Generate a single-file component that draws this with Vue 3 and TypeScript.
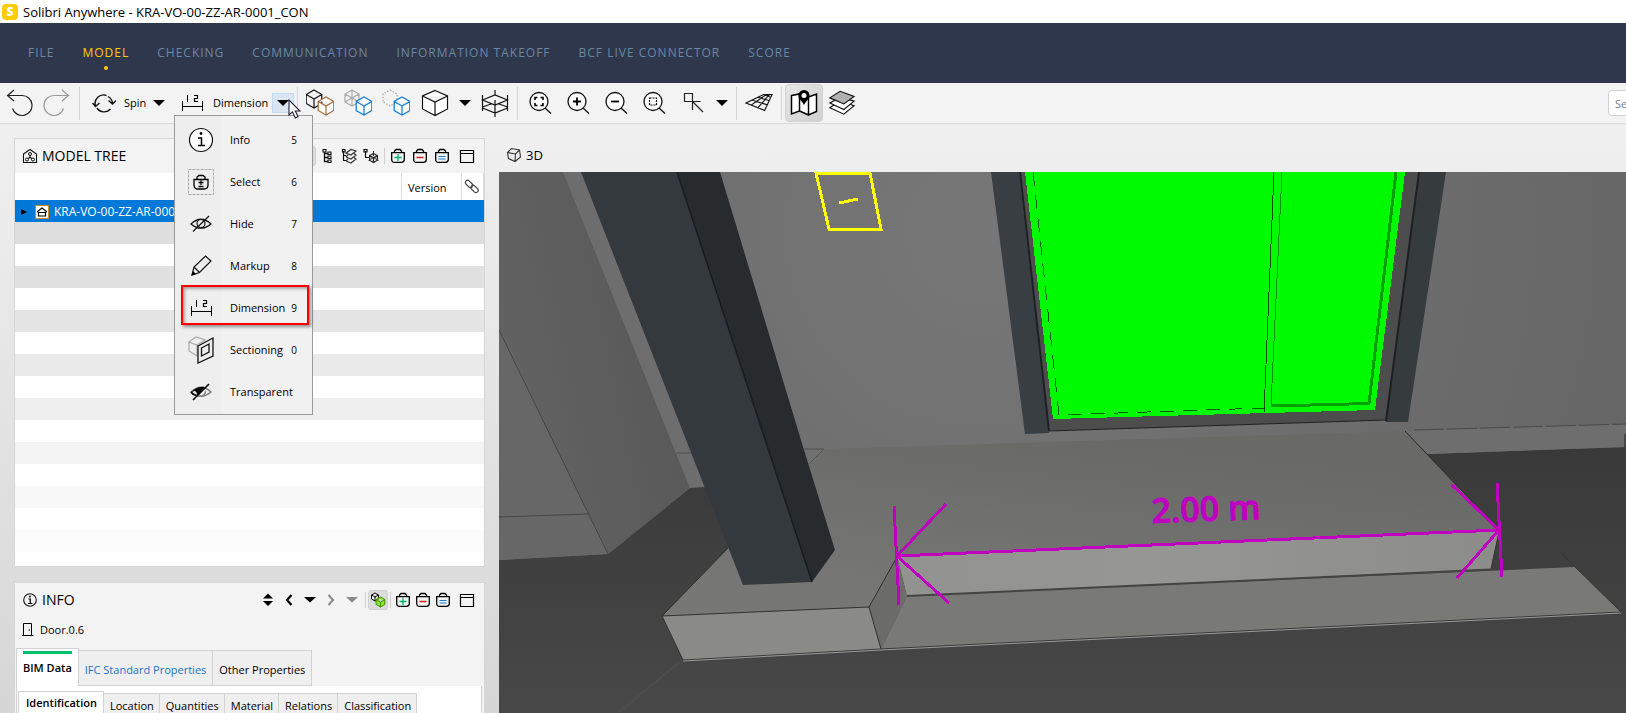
<script setup lang="ts">
import { ref } from 'vue'

interface ToolItem {
  icon: string
  label: string
}

interface MenuEntry {
  icon: string
  label: string
  key: string
}

const navItems: string[] = [
  'FILE',
  'MODEL',
  'CHECKING',
  'COMMUNICATION',
  'INFORMATION TAKEOFF',
  'BCF LIVE CONNECTOR',
  'SCORE',
]
const activeNav = ref('MODEL')

const visibilityTools: ToolItem[] = [
  { icon: 'cubes-add', label: 'Add components' },
  { icon: 'cubes-transparent', label: 'Show others transparent' },
  { icon: 'cubes-only', label: 'Show only' },
]

const zoomTools: ToolItem[] = [
  { icon: 'zoom-fit', label: 'Zoom to fit' },
  { icon: 'zoom-in', label: 'Zoom in' },
  { icon: 'zoom-out', label: 'Zoom out' },
  { icon: 'zoom-area', label: 'Zoom to area' },
  { icon: 'picker', label: 'Pick point' },
]

const menuEntries: MenuEntry[] = [
  { icon: 'm-info', label: 'Info', key: '5' },
  { icon: 'm-select', label: 'Select', key: '6' },
  { icon: 'm-hide', label: 'Hide', key: '7' },
  { icon: 'm-markup', label: 'Markup', key: '8' },
  { icon: 'dimension', label: 'Dimension', key: '9' },
  { icon: 'm-section', label: 'Sectioning', key: '0' },
  { icon: 'm-transparent', label: 'Transparent', key: '' },
]
const currentTool = ref('Dimension')

const treeTools: ToolItem[] = [
  { icon: 'tree', label: 'Containment tree' },
  { icon: 'tree-layers', label: 'Layer tree' },
  { icon: 'tree-cube', label: 'Component tree' },
]

const basketTools: ToolItem[] = [
  { icon: 'basket-add', label: 'Add to basket' },
  { icon: 'basket-remove', label: 'Remove from basket' },
  { icon: 'basket-set', label: 'Set to basket' },
]

const historyTools: ToolItem[] = [
  { icon: 'updown', label: 'Step' },
  { icon: 'back', label: 'Back' },
  { icon: 'down', label: 'Back history' },
  { icon: 'forward', label: 'Forward' },
  { icon: 'down-gray', label: 'Forward history' },
]

const propertyTabs: string[] = ['BIM Data', 'IFC Standard Properties', 'Other Properties']
const activeProperty = ref('BIM Data')

const detailTabs: string[] = [
  'Identification',
  'Location',
  'Quantities',
  'Material',
  'Relations',
  'Classification',
]
const activeDetail = ref('Identification')

const stripes: string[] = [
  '#dedede', '#ffffff', '#e1e1e1', '#ffffff', '#e5e5e5', '#ffffff', '#eaeaea', '#ffffff',
  '#efefef', '#ffffff', '#f3f3f3', '#ffffff', '#f8f8f8', '#ffffff', '#fcfcfc',
]

/** Isometric cube outline with its three visible faces. */
function cube(cx: number, cy: number, r: number): string {
  const a = Math.round(r * 8.7) / 10
  const h = r / 2
  return (
    `M${cx} ${cy - r}L${cx + a} ${cy - h}V${cy + h}L${cx} ${cy + r}L${cx - a} ${cy + h}V${cy - h}Z` +
    `M${cx - a} ${cy - h}L${cx} ${cy}L${cx + a} ${cy - h}M${cx} ${cy}V${cy + r}`
  )
}
</script>

<template>
  <div class="app">
    <svg class="defs" aria-hidden="true">
      <defs>
        <symbol id="undo" viewBox="0 0 28 28"><path d="M9 1L2.500 6.500L9 12M2.500 6.500H17a10 10 0 1 1-9.500 13" fill="none" stroke="#222" stroke-width="1.200" /></symbol>
        <symbol id="redo" viewBox="0 0 28 28"><path d="M19 1L25.500 6.500L19 12M25.500 6.500H11a10 10 0 1 0 9.500 13" fill="none" stroke="#999" stroke-width="1.200" /></symbol>
        <symbol id="spin" viewBox="0 0 24 28">
          <path d="M3.500 17A8.500 8.500 0 0 1 14.500 6.500M0.500 14L3.500 17.500L7.500 14M16 7.500A8.500 8.500 0 0 1 20.500 14M16.500 11.500L20.500 15L24 11.500M5 19A8.500 8.500 0 0 0 18.500 20" fill="none" stroke="#111" stroke-width="1.400" />
        </symbol>
        <symbol id="dimension" viewBox="0 0 28 28">
          <path d="M4.500 12V22M24.500 12V22M4.500 17.500H24.500M9.500 6V13" fill="none" stroke="#000" />
          <path d="M16 6.500H19.500V9.500H16.500V12.500H20" fill="none" stroke="#000" stroke-width="1.200" />
        </symbol>
        <symbol id="caret" viewBox="0 0 12 8"><path d="M0 1H12L6 7Z" fill="#000" /></symbol>
        <symbol id="cubes-add" viewBox="0 0 28 28">
          <path :d="cube(8, 10, 9)" fill="#f4f4f4" stroke="#111" stroke-width="1.200" />
          <path :d="cube(20, 17, 9)" fill="#fff" stroke="#a56a3a" stroke-width="1.200" />
        </symbol>
        <symbol id="cubes-transparent" viewBox="0 0 28 28">
          <path :d="cube(8, 9, 8)" fill="none" stroke="#aaa" stroke-width="1.200" />
          <path d="M8 1V9L1 13M8 9L15 13" fill="none" stroke="#aaa" stroke-width="1.200" />
          <path :d="cube(20, 17, 9)" fill="#fff" stroke="#1b82d6" stroke-width="1.300" />
        </symbol>
        <symbol id="cubes-only" viewBox="0 0 28 28">
          <path d="M8 1L15 5V13L8 17L1 13V5Z" fill="none" stroke="#aaa" stroke-width="1.200" stroke-dasharray="1.500 1.500" />
          <path :d="cube(20, 17, 9)" fill="#fff" stroke="#1b82d6" stroke-width="1.300" />
        </symbol>
        <symbol id="cube-large" viewBox="0 0 28 28"><path d="M14 1.500L26.500 7V20L14 26.500L1.500 20V7ZM1.500 7L14 13L26.500 7M14 13V26.500" fill="#fff" stroke="#111" stroke-width="1.200" /></symbol>
        <symbol id="section" viewBox="0 0 28 28">
          <path d="M1.500 6V22M26.500 6V22M14 1V6M14 11V28M1.500 11L14 6L26.500 11L14 16ZM1.500 19L14 24L26.500 19M1.500 18L10 15M26.500 18L18 15" fill="none" stroke="#111" stroke-width="1.200" />
        </symbol>
        <symbol id="lens" viewBox="0 0 28 28"><circle cx="13" cy="12.500" r="9" fill="#fff" stroke="#111" stroke-width="1.300" /><path d="M19 19L25 24.500" stroke="#111" stroke-width="1.300" /></symbol>
        <symbol id="zoom-fit" viewBox="0 0 28 28">
          <use href="#lens" /><path d="M9 11V8.500H11.500M14.500 8.500H17V11M17 14V16.500H14.500M11.500 16.500H9V14" fill="none" stroke="#000" stroke-width="1.600" />
        </symbol>
        <symbol id="zoom-in" viewBox="0 0 28 28"><use href="#lens" /><path d="M9 12.500H17M13 8.500V16.500" stroke="#000" stroke-width="1.800" /></symbol>
        <symbol id="zoom-out" viewBox="0 0 28 28"><use href="#lens" /><path d="M9 12.500H17" stroke="#000" stroke-width="1.800" /></symbol>
        <symbol id="zoom-area" viewBox="0 0 28 28"><use href="#lens" /><rect x="9.500" y="9" width="7" height="7" fill="none" stroke="#000" stroke-width="1.200" stroke-dasharray="2 1" /></symbol>
        <symbol id="picker" viewBox="0 0 28 28">
          <path d="M6.500 4.500H14.500V12.500H6.500ZM14.500 12.500H22.500M14.500 12.500V21M14.500 12.500L25 23" fill="none" stroke="#222" stroke-width="1.200" />
        </symbol>
        <symbol id="floor" viewBox="0 0 30 28">
          <path d="M1 14L20 5H29L21 22ZM7 16L23 5M14 19L26 5M8 11L24 16M14 8L26.500 11.500M20 5L28 8" fill="none" stroke="#111" stroke-width="1.200" />
        </symbol>
        <symbol id="map" viewBox="0 0 28 28">
          <path d="M1.500 6.500L9.500 5V22L1.500 25ZM9.500 22L18.500 26L26.500 22.500V5L18.500 8V26M9.500 5V22L18.500 26V8Z" fill="#fff" stroke="#000" stroke-width="1.500" />
          <path d="M14 1A5.500 5.500 0 0 1 19.500 6.500C19.500 10 16 12 14 16C12 12 8.500 10 8.500 6.500A5.500 5.500 0 0 1 14 1Z" fill="#000" /><circle cx="14" cy="6.500" r="2.500" fill="#fff" />
        </symbol>
        <symbol id="layers" viewBox="0 0 30 28">
          <g stroke="#111" stroke-width="1.200" fill="#fff">
            <path d="M2 19L17 26L28 17L13 12Z" /><path d="M2 14L17 21L28 12L13 8Z" /><path d="M2 8.500L17 15L28 7L13 1.500Z" fill="#b0b0b0" />
          </g>
        </symbol>
        <symbol id="m-info" viewBox="0 0 28 28">
          <circle cx="14" cy="14" r="11.500" fill="#fff" stroke="#111" stroke-width="1.200" />
          <path d="M11 12H14.500V19M11 19.500H18" fill="none" stroke="#000" stroke-width="1.500" /><circle cx="14" cy="7.500" r="1.400" />
        </symbol>
        <symbol id="m-select" viewBox="0 0 28 28">
          <rect x="1.500" y="1.500" width="25" height="25" fill="none" stroke="#aaa" stroke-dasharray="3 1" />
          <path d="M7 11.500H21V17Q21 21 17 21H11Q7 21 7 17ZM10 11V9L12 7.500H16L18 9V11M11.500 14.500H16.500M14 12.500V17M11.500 18.500H16.500" fill="none" stroke="#000" stroke-width="1.300" />
        </symbol>
        <symbol id="m-hide" viewBox="0 0 28 28">
          <path d="M4 14Q14 4.500 24 14Q14 22.500 4 14Z" fill="none" stroke="#111" stroke-width="1.200" />
          <circle cx="14" cy="13.500" r="4" fill="none" stroke="#111" stroke-width="1.200" /><path d="M6 21.500L22 6" stroke="#111" stroke-width="1.200" />
        </symbol>
        <symbol id="m-markup" viewBox="0 0 28 28">
          <path d="M5 23L7 15L18.500 4L24 9L12.500 20.500ZM7 15L12.500 20.500" fill="none" stroke="#111" stroke-width="1.200" /><path d="M4.500 23.500L6 19L9 22Z" />
        </symbol>
        <symbol id="m-section" viewBox="0 0 28 28">
          <path d="M2 6L9 1L18 4L10 9ZM2 6V15L10 20M10 9V20" fill="none" stroke="#aaa" stroke-width="1.200" />
          <path d="M11 10L26 2V20L11 27ZM14.500 12L22 8V16L14.500 20Z" fill="none" stroke="#111" stroke-width="1.300" />
        </symbol>
        <symbol id="m-transparent" viewBox="0 0 28 28">
          <path d="M4 14Q14 4.500 24 14Q14 22.500 4 14Z" fill="none" stroke="#777" stroke-width="1.400" />
          <path d="M4 14Q11 8 18 9L10 18Q10 14 8 13Z" /><path d="M18.500 13A5 5 0 0 1 12 18" fill="none" stroke="#888" stroke-width="1.500" />
          <path d="M4 14Q6 17 9 17.500M6 22L22 6" fill="none" stroke="#000" stroke-width="1.600" />
        </symbol>
        <symbol id="model" viewBox="0 0 16 16">
          <path d="M1.500 6L8 1.500L14.500 6V14.500H1.500ZM8 6V9L5 12M8 9L11 12" fill="none" stroke="#111" stroke-width="1.100" />
          <g fill="#f3f3f3" stroke="#111"><circle cx="8" cy="6" r="1.500" /><circle cx="5" cy="11.500" r="1.500" /><circle cx="11" cy="11.500" r="1.500" /></g>
        </symbol>
        <symbol id="tree" viewBox="0 0 16 16">
          <path d="M5.500 3V13.500H9M5.500 5.500H9M5.500 9.500H9" fill="none" stroke="#111" stroke-width="1.300" />
          <path d="M4 1.500H7V4H4ZM9 4H12V6.500H9ZM9 8H12V10.500H9ZM9 12H12V14.500H9Z" fill="#fff" stroke="#111" stroke-width="1.100" />
        </symbol>
        <symbol id="tree-layers" viewBox="0 0 16 16">
          <path d="M2.500 3V12.500H6M2.500 7.500H5M1.500 1.500H4V4H1.500Z" fill="none" stroke="#111" stroke-width="1.200" />
          <path d="M5 5L10 1.500L15 3L10 7ZM5 9L10 11L15 7L13 5.500M5 9L7 7M5 13L10 15L15 11L13 9.500M5 13L7 11" fill="none" stroke="#333" stroke-width="1.200" />
        </symbol>
        <symbol id="tree-cube" viewBox="0 0 16 16">
          <path d="M2.500 3V9.500H6M1 1.500H4V4H1Z" fill="none" stroke="#111" stroke-width="1.200" />
          <path :d="cube(10.5, 10, 4.5)" fill="none" stroke="#222" stroke-width="1.200" /><path d="M10.500 3V8M5.500 12.500L15 7M15.500 12.500L6 7" stroke="#333" />
        </symbol>
        <symbol id="basket" viewBox="0 0 16 16">
          <path d="M1.700 4.700H14.300V11.500Q14.300 14.300 11.500 14.300H4.500Q1.700 14.300 1.700 11.500ZM4.500 4.500V3L6 1.500H10L11.500 3V4.500" fill="none" stroke="#000" stroke-width="1.300" />
        </symbol>
        <symbol id="basket-add" viewBox="0 0 16 16"><use href="#basket" /><path d="M4.500 9.500H11.500M8 6V13" stroke="#00b367" stroke-width="1.300" /></symbol>
        <symbol id="basket-remove" viewBox="0 0 16 16"><use href="#basket" /><path d="M4.500 9.500H11.500" stroke="#e01010" stroke-width="1.400" /></symbol>
        <symbol id="basket-set" viewBox="0 0 16 16"><use href="#basket" /><path d="M4.500 8.500H11.500M4.500 11H11.500" stroke="#1b7cd0" stroke-width="1.200" /></symbol>
        <symbol id="window" viewBox="0 0 16 16"><path d="M1.500 2.500H14.500V14.500H1.500ZM1.500 5.500H14.500" fill="none" stroke="#000" stroke-width="1.200" /></symbol>
        <symbol id="link" viewBox="0 0 16 16">
          <g fill="none" stroke="#444" stroke-width="1.200"><rect x="1" y="3.500" width="8.500" height="4.500" rx="2.200" transform="rotate(45 5 5.500)" /><rect x="6.500" y="8.500" width="8.500" height="4.500" rx="2.200" transform="rotate(45 10.500 10.500)" /></g>
        </symbol>
        <symbol id="house" viewBox="0 0 14 14">
          <rect x="0.500" y="0.500" width="13" height="13" fill="#fff" stroke="#c98a2b" /><path d="M2 7L7 3L12 7M3.500 7.500H10.500V11H3.500Z" fill="none" stroke="#000" stroke-width="1.200" />
        </symbol>
        <symbol id="expander" viewBox="0 0 8 8"><path d="M1 1L7 4L1 7Z" /></symbol>
        <symbol id="info" viewBox="0 0 16 16">
          <circle cx="8" cy="8" r="6.300" fill="none" stroke="#111" stroke-width="1.100" /><path d="M6.500 7H8.300V11M6 11.500H10.500" fill="none" stroke="#000" stroke-width="1.200" /><circle cx="8" cy="4.500" r="0.900" />
        </symbol>
        <symbol id="updown" viewBox="0 0 16 16"><path d="M3 6.500H13L8 1.500ZM3 9H13L8 14Z" /></symbol>
        <symbol id="back" viewBox="0 0 16 16"><path d="M10.500 3L6 8L10.500 13" fill="none" stroke="#000" stroke-width="2.200" /></symbol>
        <symbol id="forward" viewBox="0 0 16 16"><path d="M5.500 3L10 8L5.500 13" fill="none" stroke="#888" stroke-width="2" /></symbol>
        <symbol id="down" viewBox="0 0 16 16"><path d="M2 5H14L8 10.500Z" /></symbol>
        <symbol id="down-gray" viewBox="0 0 16 16"><path d="M2 5H14L8 10.500Z" fill="#888" /></symbol>
        <symbol id="green-cubes" viewBox="0 0 16 16"><path :d="cube(5, 5, 4)" fill="#eee" stroke="#000" /><path :d="cube(10.5, 10, 5)" fill="#8be81c" stroke="#3f8f00" /></symbol>
        <symbol id="door" viewBox="0 0 16 16"><path d="M3.500 13.500V1.500H11.500V13.500M2 13.500H13.500M8.500 8H10" fill="none" stroke="#000" /></symbol>
        <symbol id="view3d" viewBox="0 0 16 16"><path d="M1.500 5.500L5.500 1.500L13.500 3L14.500 10L9 14.500L2.500 11.500ZM1.500 5.500L9.500 7L13.500 3M9.500 7L9 14.500" fill="none" stroke="#333" stroke-width="1.100" /></symbol>
      </defs>
    </svg>

    <header class="titlebar">
      <span class="logo">S</span>
      <span>Solibri Anywhere - KRA-VO-00-ZZ-AR-0001_CON</span>
    </header>

    <nav class="nav">
      <a v-for="item in navItems" :key="item" href="#" :class="{ active: item === activeNav }" @click.prevent="activeNav = item">{{ item }}</a>
    </nav>

    <div class="toolbar">
      <button class="tool" aria-label="Undo"><svg><use href="#undo" /></svg></button>
      <button class="tool" aria-label="Redo"><svg><use href="#redo" /></svg></button>
      <i class="sep"></i>
      <button class="tool spin"><svg><use href="#spin" /></svg>Spin</button>
      <button class="drop" aria-label="Spin options"><svg><use href="#caret" /></svg></button>
      <div class="dimension-group">
        <button class="tool dimension"><svg><use href="#dimension" /></svg>Dimension</button>
        <button class="drop open" aria-label="Dimension options"><svg><use href="#caret" /></svg></button>
        <div class="menu" role="menu">
          <button
            v-for="entry in menuEntries"
            :key="entry.label"
            role="menuitem"
            class="entry"
            :class="{ marked: entry.label === currentTool }"
            @click="currentTool = entry.label"
          >
            <svg><use :href="'#' + entry.icon" /></svg>
            <span class="entry-label">{{ entry.label }}</span>
            <span class="entry-key">{{ entry.key }}</span>
          </button>
        </div>
        <svg class="cursor" viewBox="0 0 14 21"><path d="M1 1V16L4.500 12.800L7.300 19L10 17.800L7.300 12H12Z" fill="#fff" stroke="#223" stroke-width="1.100" /></svg>
      </div>
      <i class="sep"></i>
      <button v-for="t in visibilityTools" :key="t.icon" class="tool" :aria-label="t.label"><svg><use :href="'#' + t.icon" /></svg></button>
      <button class="tool view-cube" aria-label="View cube"><svg><use href="#cube-large" /></svg></button>
      <button class="drop" aria-label="View options"><svg><use href="#caret" /></svg></button>
      <button class="tool" aria-label="Section box"><svg><use href="#section" /></svg></button>
      <i class="sep"></i>
      <button v-for="t in zoomTools" :key="t.icon" class="tool" :aria-label="t.label"><svg><use :href="'#' + t.icon" /></svg></button>
      <button class="drop" aria-label="Picker options"><svg><use href="#caret" /></svg></button>
      <i class="sep"></i>
      <button class="tool" aria-label="Grid"><svg><use href="#floor" /></svg></button>
      <i class="sep"></i>
      <button class="tool pressed" aria-label="Map"><svg><use href="#map" /></svg></button>
      <button class="tool" aria-label="Layers"><svg><use href="#layers" /></svg></button>
      <div class="search"><input type="text" placeholder="Search" aria-label="Search" /></div>
    </div>

    <main class="workspace">
      <aside class="side">
        <section class="panel tree-panel">
          <header class="panel-head">
            <svg><use href="#model" /></svg>
            <h2>MODEL TREE</h2>
            <div class="head-tools">
              <button class="mini on" aria-label="Tree view"></button>
              <button v-for="t in treeTools" :key="t.icon" class="mini" :aria-label="t.label"><svg><use :href="'#' + t.icon" /></svg></button>
              <i class="mini-sep"></i>
              <button v-for="t in basketTools" :key="t.icon" class="mini" :aria-label="t.label"><svg><use :href="'#' + t.icon" /></svg></button>
              <button class="mini last" aria-label="Maximise"><svg><use href="#window" /></svg></button>
            </div>
          </header>
          <table class="tree">
            <thead>
              <tr>
                <th class="col-name"></th>
                <th class="col-version">Version</th>
                <th class="col-link"><svg><use href="#link" /></svg></th>
              </tr>
            </thead>
            <tbody>
              <tr class="selected">
                <td colspan="3">
                  <div class="node">
                    <svg class="expander"><use href="#expander" /></svg>
                    <svg class="node-icon"><use href="#house" /></svg>
                    KRA-VO-00-ZZ-AR-0001_CON
                  </div>
                </td>
              </tr>
              <tr v-for="(color, i) in stripes" :key="i" :style="{ background: color }"><td colspan="3"></td></tr>
            </tbody>
          </table>
        </section>

        <section class="panel info-panel">
          <header class="panel-head">
            <svg><use href="#info" /></svg>
            <h2>INFO</h2>
            <div class="head-tools">
              <div class="history">
                <button v-for="t in historyTools" :key="t.icon" class="mini" :aria-label="t.label"><svg><use :href="'#' + t.icon" /></svg></button>
              </div>
              <i class="mini-sep"></i>
              <button class="mini on" aria-label="Follow selection"><svg><use href="#green-cubes" /></svg></button>
              <i class="mini-sep"></i>
              <button v-for="t in basketTools" :key="t.icon" class="mini tight" :aria-label="t.label"><svg><use :href="'#' + t.icon" /></svg></button>
              <button class="mini last" aria-label="Maximise"><svg><use href="#window" /></svg></button>
            </div>
          </header>
          <div class="object"><svg><use href="#door" /></svg>Door.0.6</div>
          <div class="tabs" role="tablist">
            <button v-for="tab in propertyTabs" :key="tab" role="tab" :class="{ active: tab === activeProperty, link: tab.startsWith('IFC') }" @click="activeProperty = tab">
              <span>{{ tab }}</span>
            </button>
          </div>
          <div class="tab-body">
            <div class="subtabs" role="tablist">
              <button v-for="tab in detailTabs" :key="tab" role="tab" :class="{ active: tab === activeDetail }" @click="activeDetail = tab">{{ tab }}</button>
            </div>
          </div>
        </section>
      </aside>

      <section class="view">
        <header class="view-head"><svg><use href="#view3d" /></svg>3D</header>
        <svg class="scene" viewBox="499 172 1127 541" preserveAspectRatio="xMinYMin slice" role="img" aria-label="3D model view with a 2.00 m dimension">
          <defs>
            <radialGradient id="wall" gradientUnits="userSpaceOnUse" cx="980" cy="230" r="680">
              <stop offset="0" stop-color="#777777" /><stop offset="1" stop-color="#666666" />
            </radialGradient>
            <linearGradient id="ground" x1="0" y1="0" x2="0" y2="1">
              <stop offset="0" stop-color="#393939" /><stop offset="1" stop-color="#484848" />
            </linearGradient>
            <linearGradient id="sidewall" gradientUnits="userSpaceOnUse" x1="499" y1="330" x2="640" y2="300">
              <stop offset="0" stop-color="#626262" /><stop offset="1" stop-color="#5a5a5a" />
            </linearGradient>
            <linearGradient id="slab" gradientUnits="userSpaceOnUse" x1="1000" y1="430" x2="980" y2="610">
              <stop offset="0" stop-color="#696968" /><stop offset="1" stop-color="#777776" />
            </linearGradient>
            <linearGradient id="riser" gradientUnits="userSpaceOnUse" x1="900" y1="0" x2="1500" y2="0">
              <stop offset="0" stop-color="#929290" /><stop offset="0.400" stop-color="#969694" /><stop offset="1" stop-color="#8c8c8a" />
            </linearGradient>
          </defs>
          <rect x="499" y="172" width="1127" height="541" fill="url(#wall)" />
          <path d="M499 560L608 554L690 488L704 487L1428 454L1626 447V713H499Z" fill="url(#ground)" />
          <path d="M499 172H563L690 488L608 554L499 330Z" fill="url(#sidewall)" />
          <path d="M499 330L608 554L499 560Z" fill="#676767" />
          <path d="M499 330L608 554M499 517L588 514" fill="none" stroke="#444" />
          <path d="M676 453H692M804 449H824L809 464" fill="none" stroke="#4c4c4c" />
          <path d="M1405 431H1414L1626 424V447L1428 454Z" fill="#6e6e6e" />
          <path d="M1414 430L1626 424" stroke="#4a4a4a" stroke-dasharray="30 3" />
          <path d="M1625 434V447" stroke="#222" />
          <path d="M682 660L618 713" stroke="#4c4c4c" stroke-width="2" />

          <path d="M824 449L1405 431L1499 530L897 556L869 607L662 616L728 548Z" fill="url(#slab)" />
          <path d="M662 616L728 548M1405 431L1499 530" fill="none" stroke="#2b2b2b" />
          <path d="M662 616L869 607L881 649L683 660Z" fill="#8a8a88" />
          <path d="M869 607L897 557L907 596L881 649Z" fill="#6c6c6b" />
          <path d="M662 616L869 607L881 649M869 607L897 557M662 616L683 660" fill="none" stroke="#333" />
          <path d="M907 596L1575 567L1621 612L881 649Z" fill="#797978" />
          <path d="M897 556L1499 530L1491 569L907 596Z" fill="url(#riser)" />
          <path d="M907 596L1491 569.500" stroke="#444" stroke-width="2" />
          <path d="M1499 532L1491 569M1561 553L1621 612" stroke="#333" />
          <path d="M683 660L881 649L1621 612" fill="none" stroke="#3a3a3a" />
          <path d="M683 661L881 650L1621 613" fill="none" stroke="#999" />

          <path d="M581 172H677L812 582L743 585Z" fill="#33393c" />
          <path d="M677 172H720L804 450L835 550L812 582Z" fill="#272b2d" />
          <path d="M677 172L812 582" stroke="#191c1d" stroke-width="1.500" />

          <path d="M1019 172H1420L1386 420L1049 431Z" fill="#4d4d4d" />
          <path d="M991 172H1019L1049 433L1025 434Z" fill="#383e41" />
          <path d="M1419 172H1446L1408 422L1386 422Z" fill="#363b3e" />
          <path d="M1020 172L1049 431M1419 172L1386 421" stroke="#1d2022" stroke-width="2" />
          <path d="M1049 431L1386 420" stroke="#222" />
          <g shape-rendering="crispEdges">
            <path d="M1025 172H1405L1375 410L1053 419Z" fill="#00fb00" />
            <path d="M1033 172L1059 415L1265 408" fill="none" stroke="#046004" stroke-dasharray="14 9" />
            <path d="M1274 172L1264 413" stroke="#044f04" />
            <path d="M1282 172L1271 405" stroke="#0a900a" />
            <path d="M1396 172L1369 403.500L1271 406" fill="none" stroke="#00a000" stroke-width="3" />
          </g>

          <g fill="none" stroke="#ffff00" stroke-width="3" shape-rendering="crispEdges">
            <path d="M816 173H870L881 229H829Z" />
            <path d="M839 203L858 199" />
          </g>

          <g fill="none" stroke="#c000c0" stroke-width="3" shape-rendering="crispEdges">
            <path d="M897 556L1499 530" />
            <path d="M894 506L899 605M897 556L946 504M897 556L949 603" />
            <path d="M1497 483L1502 577M1452 485L1499 530L1457 578" />
          </g>
          <text x="1152" y="523" transform="rotate(-2 1152 523)" class="measure">2.00 m</text>
        </svg>
      </section>
    </main>
  </div>
</template>

<style>
html,
body,
#app {
  height: 100%;
  margin: 0;
}
</style>

<style scoped>
.app {
  height: 100vh;
  display: flex;
  flex-direction: column;
  overflow: hidden;
  background: #efefef;
  color: #000;
  font: 11px/16px "Open Sans", "Noto Sans", sans-serif;
}
.app * {
  box-sizing: border-box;
}
.defs {
  position: absolute;
  width: 0;
  height: 0;
}
button {
  margin: 0;
  padding: 0;
  border: 0;
  background: none;
  color: inherit;
  font: inherit;
}
svg {
  display: block;
  flex: none;
}
.titlebar {
  flex: none;
  display: flex;
  align-items: center;
  gap: 5px;
  height: 23px;
  padding: 0 2px;
  background: #fff;
  font-size: 13px;
}
.logo {
  width: 16px;
  height: 16px;
  border-radius: 4px;
  background: #fc0;
  color: #fff;
  font-size: 12px;
  font-weight: 800;
  text-align: center;
}
.nav {
  flex: none;
  display: flex;
  align-items: center;
  gap: 28px;
  height: 60px;
  padding: 0 28px;
  background: #2f374c;
  font-size: 12px;
  letter-spacing: 1px;
}
.nav a {
  position: relative;
  color: #6a88a5;
  text-decoration: none;
  white-space: nowrap;
}
.nav a.active {
  color: #fc0;
}
.nav a.active::after {
  content: "";
  position: absolute;
  left: 50%;
  bottom: -9px;
  width: 4px;
  height: 4px;
  margin-left: -2px;
  border-radius: 50%;
  background: #fc0;
}
.toolbar {
  position: relative;
  z-index: 2;
  flex: none;
  display: flex;
  align-items: center;
  height: 41px;
  border-bottom: 1px solid #d8d8d8;
  background: #f3f3f3;
}
.tool {
  flex: none;
  display: flex;
  align-items: center;
  justify-content: center;
  width: 38px;
  height: 38px;
}
.tool svg {
  width: 28px;
  height: 28px;
}
.tool.pressed {
  border: 1px solid #d2d2d2;
  border-radius: 4px;
  background: linear-gradient(135deg, #e6e6e6, #d0d0d0);
}
.tool.spin {
  justify-content: flex-start;
  width: 65px;
  padding-left: 9px;
  gap: 8px;
}
.tool.spin svg {
  width: 24px;
}
.tool.dimension {
  justify-content: flex-start;
  width: 102px;
  padding-left: 8px;
  gap: 7px;
}
.tool.view-cube {
  margin-left: 1px;
}
.drop {
  flex: none;
  display: flex;
  align-items: center;
  justify-content: center;
  width: 22px;
  height: 20px;
}
.drop svg {
  width: 12px;
  height: 8px;
}
.drop.open {
  border: 1px solid #c0dcf3;
  background: #d9e6f2;
}
.sep {
  flex: none;
  width: 1px;
  height: 33px;
  margin: 0 3px;
  background: #d6d6d6;
}
.dimension-group {
  position: relative;
  display: flex;
  align-items: center;
}
.menu {
  position: absolute;
  top: 31px;
  left: 4px;
  width: 139px;
  padding: 3px 3px 1px 6px;
  border: 1px solid #999;
  background: linear-gradient(90deg, #eeeeee 46px, #f1f1f1 46px);
}
.entry {
  display: flex;
  align-items: center;
  width: 100%;
  height: 42px;
  padding-left: 6px;
  text-align: left;
}
.entry svg {
  width: 28px;
  height: 28px;
}
.entry-label {
  flex: 1;
  margin-left: 15px;
}
.entry-key {
  flex: none;
  margin-right: 12px;
  font-size: 10px;
}
.entry.marked {
  position: relative;
}
.entry.marked::after {
  content: "";
  position: absolute;
  inset: -2px 0 4px;
  border: 2px solid #f00;
  box-shadow: 2px 2px 3px rgba(0, 0, 0, 0.4), inset 2px 2px 3px rgba(0, 0, 0, 0.3);
}
.cursor {
  position: absolute;
  top: 15px;
  left: 118px;
  width: 14px;
  height: 21px;
}
.search {
  width: 18px;
  margin-left: auto;
  overflow: hidden;
}
.search input {
  display: block;
  width: 180px;
  height: 26px;
  padding: 0 6px;
  border: 1px solid #d0d0d0;
  border-radius: 4px;
  background: #fff;
  font: inherit;
}
.search input::placeholder {
  color: #808080;
}
.workspace {
  flex: 1;
  min-height: 0;
  display: flex;
  background: linear-gradient(#f0f0f0, #d6d6d6);
}
.side {
  flex: none;
  display: flex;
  flex-direction: column;
  gap: 15px;
  width: 499px;
  padding: 14px 14px 0;
}
.panel {
  border: 1px solid #d6d6d6;
  background: #f3f3f3;
  overflow: hidden;
}
.tree-panel {
  flex: 1;
  min-height: 0;
  background: #fff;
}
.info-panel {
  flex: none;
  height: 131px;
  border-bottom: 0;
}
.panel-head {
  display: flex;
  align-items: center;
  gap: 4px;
  height: 34px;
  padding: 0 8px 0 7px;
  background: #f3f3f3;
}
.panel-head > svg,
.mini svg {
  width: 16px;
  height: 16px;
}
h2 {
  margin: 0;
  font-size: 14px;
  font-weight: 400;
}
.head-tools {
  display: flex;
  align-items: center;
  margin-left: auto;
}
.mini {
  flex: none;
  display: flex;
  align-items: center;
  justify-content: center;
  width: 22px;
  height: 22px;
}
.mini.tight,
.mini.on,
.history .mini {
  width: 20px;
}
.mini.on {
  height: 20px;
  border: 1px solid #d2d2d2;
  border-radius: 3px;
  background: #dcdcdc;
}
.info-panel .mini.on {
  margin: 0 2px;
}
.mini.last {
  width: 18px;
  margin-left: 5px;
}
.mini-sep {
  width: 1px;
  height: 16px;
  background: #cfcfcf;
}
.tree-panel .mini-sep {
  margin: 0 2px;
}
.info-panel .mini-sep:last-of-type {
  margin-right: 2px;
}
.history {
  display: flex;
  gap: 1px;
  margin-right: 3px;
}
.tree {
  width: 100%;
  border-collapse: collapse;
  table-layout: fixed;
}
.tree th {
  height: 27px;
  padding: 2px 0 0 6px;
  border-right: 1px solid #dcdcdc;
  font-weight: 400;
  text-align: left;
}
.tree th:last-child {
  padding: 0 0 2px 2px;
}
.col-version {
  width: 60px;
}
.col-link {
  width: 22px;
}
.col-link svg {
  width: 16px;
  height: 16px;
}
.tree td {
  height: 22px;
  padding: 0;
}
.selected {
  background: #0078d7;
  color: #fff;
}
.node {
  display: flex;
  align-items: center;
  padding: 1px 0 0 5px;
  font-size: 12px;
}
.expander {
  width: 8px;
  height: 8px;
  margin-right: 7px;
}
.node-icon {
  width: 14px;
  height: 14px;
  margin-right: 5px;
}
.object {
  display: flex;
  align-items: center;
  gap: 4px;
  height: 31px;
  padding: 0 5px 6px;
}
.object svg {
  width: 16px;
  height: 16px;
}
.tabs {
  display: flex;
  align-items: flex-end;
  height: 38px;
  padding-left: 1px;
}
.tabs button {
  height: 36px;
  padding: 3px 6px 0;
  border: 1px solid #d2d2d2;
  border-left: 0;
  background: #efefef;
  white-space: nowrap;
}
.tabs .link {
  color: #1a73c8;
}
.tabs .active {
  display: flex;
  height: 38px;
  padding: 2px 6px 0;
  border-left: 1px solid #d2d2d2;
  border-bottom: 0;
  background: #fff;
}
.tabs .active span {
  padding-top: 6px;
  border-top: 3px solid #00c06a;
  font-weight: 600;
}
.tab-body {
  margin: 0 2px 0 1px;
  padding: 5px 1px 0;
  border-left: 1px solid #d2d2d2;
  border-right: 1px solid #d2d2d2;
  background: #fff;
}
.subtabs {
  display: flex;
  align-items: flex-end;
}
.subtabs button {
  height: 24px;
  padding: 2px 5px 0 6px;
  border: 1px solid #d2d2d2;
  border-left: 0;
  background: #efefef;
  white-space: nowrap;
}
.subtabs .active {
  height: 26px;
  padding: 0 6px 2px 7px;
  border-left: 1px solid #d2d2d2;
  background: #fff;
  font-weight: 600;
}
.view {
  flex: 1;
  min-width: 0;
  display: flex;
  flex-direction: column;
}
.view-head {
  flex: none;
  display: flex;
  align-items: center;
  gap: 4px;
  height: 48px;
  padding: 14px 7px 0;
  font-size: 13px;
}
.view-head svg {
  width: 16px;
  height: 16px;
}
.scene {
  flex: 1;
  width: 100%;
  min-height: 0;
}
.measure {
  fill: #c000c0;
  stroke: #c000c0;
  stroke-width: 1px;
  font: 600 34px "Open Sans", "Noto Sans", sans-serif;
}
</style>
